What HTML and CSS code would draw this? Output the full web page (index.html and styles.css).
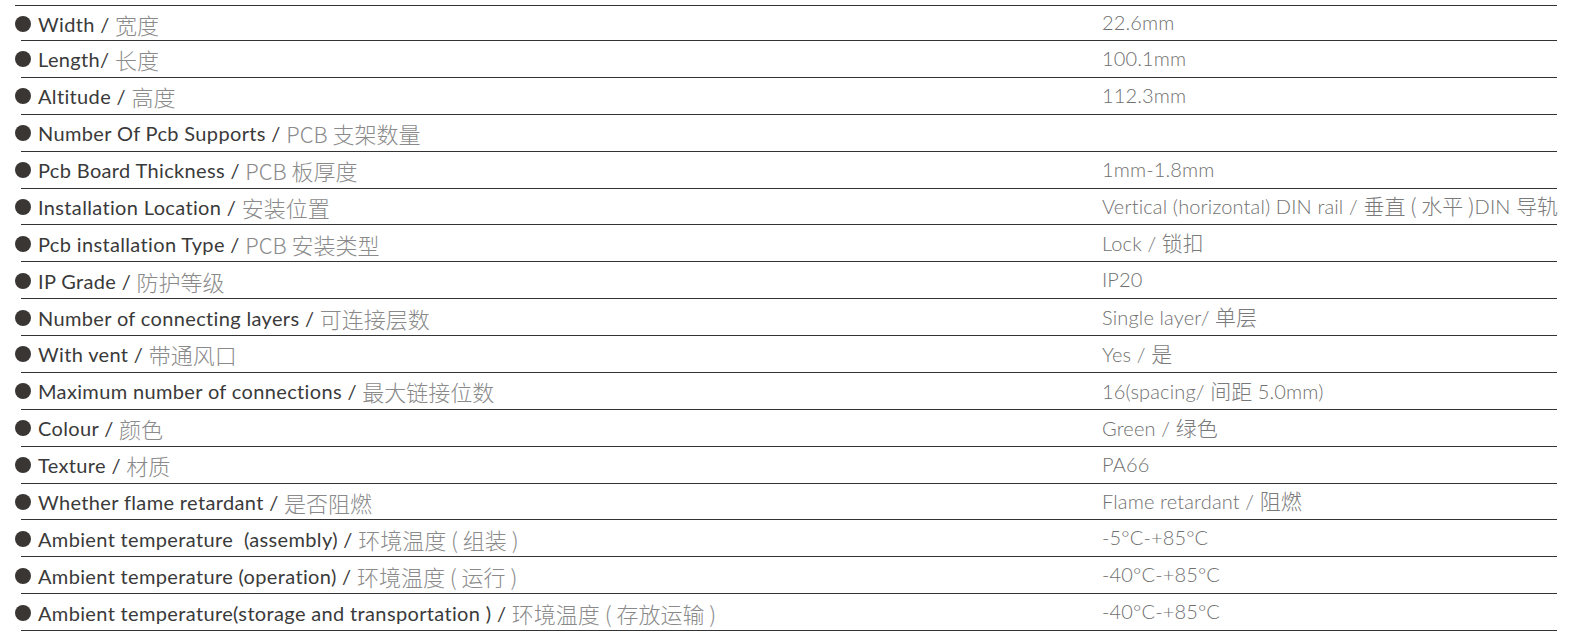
FILE: index.html
```html
<!DOCTYPE html>
<html lang="en">
<head>
<meta charset="utf-8">
<title>Specifications</title>
<link rel="stylesheet" href="styles.css">
</head>
<body>
<div class="spec">
  <div class="row"><div class="label"><span class="dot"></span><span class="en">Width / </span><span class="zh">宽度</span></div><div class="value">22.6mm</div></div>
  <div class="row"><div class="label"><span class="dot"></span><span class="en">Length/ </span><span class="zh">长度</span></div><div class="value">100.1mm</div></div>
  <div class="row"><div class="label"><span class="dot"></span><span class="en">Altitude / </span><span class="zh">高度</span></div><div class="value">112.3mm</div></div>
  <div class="row"><div class="label"><span class="dot"></span><span class="en">Number Of Pcb Supports / </span><span class="zh">PCB 支架数量</span></div><div class="value"></div></div>
  <div class="row"><div class="label"><span class="dot"></span><span class="en">Pcb Board Thickness / </span><span class="zh">PCB 板厚度</span></div><div class="value">1mm-1.8mm</div></div>
  <div class="row"><div class="label"><span class="dot"></span><span class="en">Installation Location / </span><span class="zh">安装位置</span></div><div class="value">Vertical (horizontal) DIN rail / <span class="cj">垂直 ( 水平 )</span>DIN <span class="cj">导轨</span></div></div>
  <div class="row"><div class="label"><span class="dot"></span><span class="en">Pcb installation Type / </span><span class="zh">PCB 安装类型</span></div><div class="value">Lock / <span class="cj">锁扣</span></div></div>
  <div class="row"><div class="label"><span class="dot"></span><span class="en">IP Grade / </span><span class="zh">防护等级</span></div><div class="value">IP20</div></div>
  <div class="row"><div class="label"><span class="dot"></span><span class="en">Number of connecting layers / </span><span class="zh">可连接层数</span></div><div class="value">Single layer/ <span class="cj">单层</span></div></div>
  <div class="row"><div class="label"><span class="dot"></span><span class="en">With vent / </span><span class="zh">带通风口</span></div><div class="value">Yes / <span class="cj">是</span></div></div>
  <div class="row"><div class="label"><span class="dot"></span><span class="en">Maximum number of connections / </span><span class="zh">最大链接位数</span></div><div class="value">16(spacing/ <span class="cj">间距</span> 5.0mm)</div></div>
  <div class="row"><div class="label"><span class="dot"></span><span class="en">Colour / </span><span class="zh">颜色</span></div><div class="value">Green / <span class="cj">绿色</span></div></div>
  <div class="row"><div class="label"><span class="dot"></span><span class="en">Texture / </span><span class="zh">材质</span></div><div class="value">PA66</div></div>
  <div class="row"><div class="label"><span class="dot"></span><span class="en">Whether flame retardant / </span><span class="zh">是否阻燃</span></div><div class="value">Flame retardant / <span class="cj">阻燃</span></div></div>
  <div class="row"><div class="label"><span class="dot"></span><span class="en">Ambient temperature&nbsp;&nbsp;(assembly) / </span><span class="zh">环境温度 ( 组装 )</span></div><div class="value">-5°C-+85°C</div></div>
  <div class="row"><div class="label"><span class="dot"></span><span class="en">Ambient temperature (operation) / </span><span class="zh">环境温度 ( 运行 )</span></div><div class="value">-40°C-+85°C</div></div>
  <div class="row"><div class="label"><span class="dot"></span><span class="en">Ambient temperature(storage and transportation ) / </span><span class="zh">环境温度 ( 存放运输 )</span></div><div class="value">-40°C-+85°C</div></div>
</div>
</body>
</html>
```

FILE: styles.css
```css
html, body {
  margin: 0;
  padding: 0;
  background: #ffffff;
}

body {
  font-family: "Lato", "Noto Sans CJK SC", sans-serif;
}

.spec {
  margin: 5px 0 0 15px;
  width: 1542px;
  border-top: 1px solid #333333;
}

.row {
  display: grid;
  grid-template-columns: 1087px 1fr;
  align-items: center;
  height: 36.875px;
  background: linear-gradient(#333333, #333333) no-repeat 6px 100% / calc(100% - 6px) 1px;
}

.row:first-child {
  height: 35px;
}

.label {
  display: flex;
  align-items: center;
  font-size: 20px;
  color: #3a3a3a;
  white-space: nowrap;
}

.dot {
  width: 16px;
  height: 16px;
  border-radius: 50%;
  background: #3a3634;
  margin-right: 7px;
  flex: none;
}

.en {
  white-space: pre;
  letter-spacing: 0.35px;
}

.zh {
  color: #8a8a8a;
  font-family: "Noto Sans CJK SC", sans-serif;
  font-weight: 300;
  font-size: 22px;
  white-space: pre;
}

.value {
  font-size: 20px;
  font-weight: 300;
  color: #707070;
  white-space: nowrap;
  letter-spacing: 0.15px;
  margin-top: -3px;
}

.cj {
  font-family: "Noto Sans CJK SC", sans-serif;
  font-weight: 300;
  font-size: 21px;
  color: #7a7a7a;
  letter-spacing: 0;
}
```
